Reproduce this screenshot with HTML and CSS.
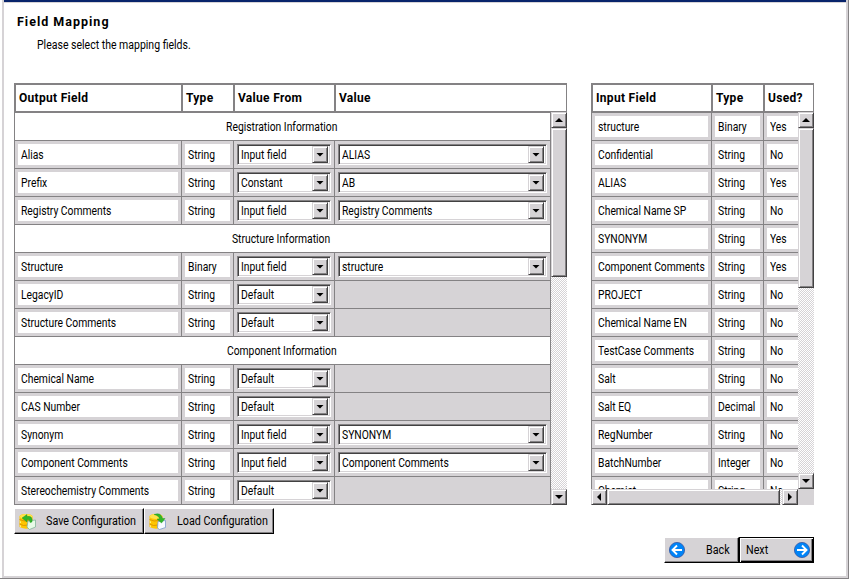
FILE: index.html
```
<!DOCTYPE html>
<html lang="en">
<head>
<meta charset="utf-8">
<title>Field Mapping</title>
<link rel="stylesheet" href="styles.css">
</head>
<body>
<main class="window">
  <h1>Field Mapping</h1>
  <p class="intro"><span>Please select the mapping fields.</span></p>
  <div class="panels">
    <section class="panel output">
      <div class="head"><b>Output Field</b><b>Type</b><b>Value From</b><b>Value</b></div>
      <div class="body">
        <div class="rows" id="output-rows"></div>
        <div class="vbar"><i class="btn up"></i><i class="thumb"></i><i class="track"></i><i class="btn down"></i></div>
      </div>
    </section>
    <section class="panel input">
      <div class="head"><b>Input Field</b><b>Type</b><b>Used?</b></div>
      <div class="body">
        <div class="rows" id="input-rows"></div>
        <div class="vbar"><i class="btn up"></i><i class="thumb"></i><i class="track"></i><i class="btn down"></i></div>
      </div>
      <div class="hbar"><i class="btn left"></i><i class="thumb"></i><i class="track"></i><i class="btn right"></i><i class="corner"></i></div>
    </section>
  </div>
  <div class="config">
    <div class="button"><svg class="db" viewBox="0 0 17 17"><path d="M.5 3.5Q.5 1 7 1t6.500 2.500V14q-6 3.500-13 0z" fill="#ffc600"/><ellipse cx="7" cy="3.500" rx="6.300" ry="2.400" fill="#ffe34a"/><path d="M.5 6.500q5 2.500 10 1M.5 11q4 2.500 8 1" stroke="#d68c00" stroke-width=".8" fill="none"/><path d="M1.500 8.300v1.700M1.500 12.300v1.700" stroke="#fff37b"/><path d="M9 8l7.500-1v7l-6 2.500L8 14z" fill="#e7fbe7" stroke="#84b59c" stroke-width=".8"/><path d="M13 9Q14 2.500 8 3.500V1.500L3 5l5 4V6.500q3-.5 3 3z" fill="#31b529" stroke="#189418" stroke-width=".4"/></svg><span>Save Configuration</span></div>
    <div class="button load"><svg class="db" viewBox="0 0 17 17"><path d="M.5 3.500Q.5 1 7 1t6.500 2.500V14q-6 3.500-13 0z" fill="#ffc600"/><ellipse cx="7" cy="3.500" rx="6.300" ry="2.400" fill="#ffe34a"/><path d="M.5 6.500q5 2.500 9 1M.5 11q4 2.500 8 1" stroke="#d68c00" stroke-width=".8" fill="none"/><path d="M1.500 8.300v1.700M1.500 12.300v1.700" stroke="#fff37b"/><path d="M9 8.500l7.500-1v7l-6 2L8.500 15z" fill="#f7fbff" stroke="#7b9cce" stroke-width=".8"/><path d="M5 1.500Q12-1 13.500 5.500H16L12.500 10 8 6h2.500Q10 2.500 5 1.500z" fill="#31b529" stroke="#189418" stroke-width=".4"/></svg><span>Load Configuration</span></div>
  </div>
  <div class="nav">
    <div class="button back"><svg class="arrow" viewBox="0 0 16 16"><circle cx="8" cy="8" r="7.6" fill="#0084f7" stroke="#3155a5" stroke-width=".8"/><path d="M13 8H4M8 3.5L3.5 8 8 12.5" fill="none" stroke="#fff" stroke-width="1.9"/></svg><span>Back</span></div>
    <div class="button next"><span>Next</span><svg class="arrow" viewBox="0 0 16 16"><circle cx="8" cy="8" r="7.6" fill="#0084f7" stroke="#3155a5" stroke-width=".8"/><path d="M3 8h9M8 3.5L12.5 8 8 12.5" fill="none" stroke="#fff" stroke-width="1.9"/></svg></div>
  </div>
</main>
<script src="script.js"></script>
</body>
</html>
```
FILE: styles.css
```
* { box-sizing: border-box; }
body {
  width: 849px;
  height: 579px;
  margin: 0;
  padding-left: 2px;
  border: solid #848284;
  border-width: 0 1px 1px 0;
  background: #fff;
  color: #000;
  font: 12px/14px Roboto, sans-serif;
  overflow: hidden;
}
.window {
  width: 846px;
  height: 578px;
  padding: 12px 0 0 10px;
  border: solid #d6d3d6;
  border-width: 0 2px 2px;
  background: linear-gradient(#08246b 0 2px, #d6d3d6 2px 3px, #fff 3px);
}
h1 { margin: 3px 0 0 3px; font: bold 12.5px/14px Roboto, sans-serif; letter-spacing: 1px; }
.intro { margin: 9px 0 0 23px; }
.intro span, .cell span, .select span, .button span { display: block; transform: scaleX(.86); transform-origin: 0 0; white-space: nowrap; }
.intro span { transform: scaleX(.875); }
.button span { transform: scaleX(.895); }
.section span { display: inline-block; transform: translateX(-1px) scaleX(.86); }
.panels { display: flex; gap: 24px; height: 422px; margin-top: 31px; }
.panel { display: flex; flex-direction: column; }
.output { --cols: 167px 52px 101px 216px; --row-cols: 166px 52px 101px 216px; width: 553px; }
.input { --cols: 120px 52px 50px; --row-cols: 119px 52px 50px; width: 223px; }
.head { display: grid; grid-template-columns: var(--cols); flex: 0 0 30px; border: solid #848284; border-width: 2px 1px 2px 0; }
.head b { border-left: 2px solid #848284; padding: 6px 0 0 3px; font: bold 12px/14px Roboto, sans-serif; letter-spacing: .3px; white-space: nowrap; }
.body { display: flex; flex: 1; min-height: 0; margin-top: -1px; }
.rows { flex: 1; overflow: hidden; border-left: 1px solid #848284; padding-top: 1px; min-width: 0; }
.output .rows { border-right: 1px solid #848284; }
.row { display: grid; grid-template-columns: var(--row-cols); height: 28px; border-bottom: 1px solid #848284; background: #d6d3d6; }
.row > * { padding: 3px; min-width: 0; }
.row > * + * { border-left: 1px solid #848284; }
.field { height: 21px; background: #fff; padding: 4px 0 0 3px; }
.section { height: 28px; border-bottom: 1px solid #848284; text-align: center; padding: 7px 0 0; }
.select { display: flex; height: 21px; border: 1px solid #848284; border-right-color: #fff; border-bottom-color: #fff; background: #fff; box-shadow: inset 1px 1px #424142, inset -1px -1px #d6d3d6; padding: 1px 2px 1px 3px; }
.select span { flex: 1; padding-top: 2px; }
.btn, .thumb { display: grid; place-items: center; background: #d6d3d6; border: 1px solid #d6d3d6; border-right-color: #424142; border-bottom-color: #424142; box-shadow: inset 1px 1px #fff, inset -1px -1px #848284; }
.btn { width: 16px; height: 16px; flex: none; }
.btn::before { content: ""; width: 8px; height: 4px; background: #000; clip-path: polygon(0 0, 100% 0, 50% 100%); }
.select .btn { height: 17px; }
.up::before { clip-path: polygon(50% 0, 100% 100%, 0 100%); }
.left::before, .right::before { width: 4px; height: 8px; clip-path: polygon(100% 0, 100% 100%, 0 50%); }
.right::before { clip-path: polygon(0 0, 100% 50%, 0 100%); }
.vbar { display: flex; flex-direction: column; width: 16px; }
.vbar .thumb { height: 149px; }
.input .vbar .thumb { height: 160px; }
.track { flex: 1; background: repeating-conic-gradient(#d6d3d6 0 25%, #fff 0 50%) 0 0 / 2px 2px; }
.hbar { display: flex; height: 16px; }
.hbar .thumb { width: 173px; }
.corner { width: 16px; background: #d6d3d6; }
.config { display: flex; margin-top: 3px; }
.button { display: flex; align-items: center; width: 130px; height: 26px; background: #d6d3d6; border: 1px solid #fff; border-right-color: #000; border-bottom-color: #000; box-shadow: inset -1px -1px #848284; }
.button svg { flex: none; }
.db { width: 17px; height: 17px; margin: 0 10px 0 4px; }
.load .db { margin-right: 11px; }
.nav { display: flex; margin: 3px 0 0 650px; }
.nav .button { width: 75px; }
.arrow { width: 16px; height: 16px; }
.back .arrow { margin: 0 21px 0 4px; }
.nav .next { border: 1px solid #000; box-shadow: inset 1px 1px #fff, inset -1px -1px #000, inset -2px -2px #848284; padding-left: 6px; }
.next .arrow { margin: 0 3px 0 auto; }
```
FILE: script.js
```
const outputs = [
  ["Registration Information"],
  ["Alias", "String", "Input field", "ALIAS"],
  ["Prefix", "String", "Constant", "AB"],
  ["Registry Comments", "String", "Input field", "Registry Comments"],
  ["Structure Information"],
  ["Structure", "Binary", "Input field", "structure"],
  ["LegacyID", "String", "Default"],
  ["Structure Comments", "String", "Default"],
  ["Component Information"],
  ["Chemical Name", "String", "Default"],
  ["CAS Number", "String", "Default"],
  ["Synonym", "String", "Input field", "SYNONYM"],
  ["Component Comments", "String", "Input field", "Component Comments"],
  ["Stereochemistry Comments", "String", "Default"]
];
const inputs = [
  ["structure", "Binary", "Yes"], ["Confidential", "String", "No"],
  ["ALIAS", "String", "Yes"], ["Chemical Name SP", "String", "No"],
  ["SYNONYM", "String", "Yes"], ["Component Comments", "String", "Yes"],
  ["PROJECT", "String", "No"], ["Chemical Name EN", "String", "No"],
  ["TestCase Comments", "String", "No"], ["Salt", "String", "No"],
  ["Salt EQ", "Decimal", "No"], ["RegNumber", "String", "No"],
  ["BatchNumber", "Integer", "No"], ["Chemist", "String", "No"]
];
const cell = t => `<div class="cell"><div class="field"><span>${t}</span></div></div>`;
const select = t => t
  ? `<div class="pick"><div class="select"><span>${t}</span><i class="btn"></i></div></div>`
  : `<div class="pick"></div>`;
document.getElementById("output-rows").innerHTML = outputs.map(r =>
  r.length === 1
    ? `<div class="section"><span>${r[0]}</span></div>`
    : `<div class="row">${cell(r[0])}${cell(r[1])}${select(r[2])}${select(r[3])}</div>`
).join("");
document.getElementById("input-rows").innerHTML = inputs.map(r =>
  `<div class="row">${r.map(cell).join("")}</div>`
).join("");
```
